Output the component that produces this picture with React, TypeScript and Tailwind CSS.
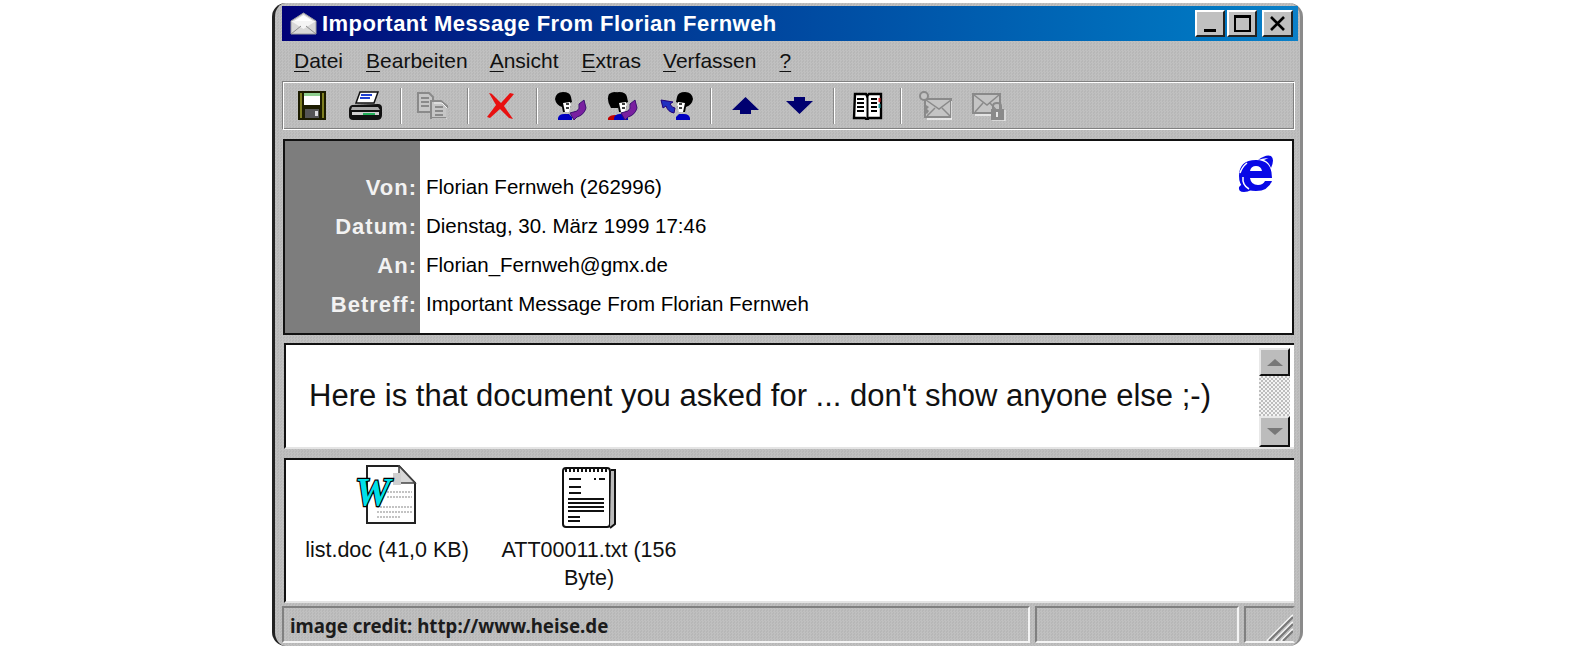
import React from "react";

const Sep = ({ ml, mr }: { ml: string; mr: string }) => (
  <div className={`h-[36px] w-[2px] bg-[#8a8a8a] border-r border-white ${ml} ${mr}`} />
);

const Person = ({ arrow, two, left }: { arrow: string; two?: boolean; left?: boolean }) => (
  <svg width="34" height="30" viewBox="0 0 34 30" className="block">
    {two && (
      <g>
        <path d="M10 24h11v5H3v-2q2-3 7-3z" fill="#c00000" />
        <path d="M4 3q6-4 10 0l2 7-3 7H6Q1 9 4 3z" fill="#000" />
      </g>
    )}
    <g transform={left ? "translate(34 0) scale(-1 1)" : two ? "translate(5 0)" : ""}>
      <path d="M4 29v-2q1-4 6-4h5l3 3v3z" fill="#0000c0" />
      <path d="M1 8q1-7 8-7t8 5l1 5-2 1 1 3-3 6H9l-1-5Q2 14 1 8z" fill="#000" />
      <path d="M9 12l7-1 1 3-2 7h-4z" fill="#fff" />
      <path d="M12 13h3M12 17h3" stroke="#000" strokeWidth="1.4" />
    </g>
    {left ? (
      <path d="M1 9l2 8 3-2q2 6 8 7l1-5q-3 0-5-4l3-2z" fill={arrow} stroke="#21007a" strokeWidth="1" />
    ) : (
      <path d="M30 9l2 8q-2 7-9 9l-3 3-4-7 7-2q3-2 2-7z" fill={arrow} stroke="#3a1070" strokeWidth="1" />
    )}
  </svg>
);

const Save = () => (
  <svg width="28" height="29" viewBox="0 0 28 29" className="block">
    <path d="M0 0h28v29H0z" fill="#1c1c00" />
    <path d="M2 2h2v25H2zM24 2h2v25h-2z" fill="#7f7f20" />
    <path d="M6 2h16v12H6z" fill="#fff" />
    <path d="M6 2h16v3H6z" fill="#8fcf8f" />
    <path d="M7 18h14v9H7z" fill="#555" />
    <path d="M17 20h3v5h-3z" fill="#ddd" />
  </svg>
);

const Printer = () => (
  <svg width="34" height="30" viewBox="0 0 34 30" className="block">
    <path d="M11 1h18l-4 11H7z" fill="#fff" stroke="#111" strokeWidth="1.5" />
    <path d="M12 4h11M11 7h10" stroke="#2040d0" strokeWidth="2" />
    <path d="M3 14q-3 1-3 5v6q0 4 4 4h24q5 0 5-5v-7q0-4-4-4z" fill="#111" />
    <path d="M3 16h26l2 3H2z" fill="#a8a8a8" />
    <path d="M3 21h27v3H3z" fill="#d0d0d0" />
    <path d="M14 22h12v2H14z" fill="#22b05a" />
  </svg>
);

const Copy = () => (
  <svg width="31" height="27" viewBox="0 0 31 27" className="block">
    <g fill="none" stroke="#8a8a8a" strokeWidth="2">
      <path d="M1 1h11l4 4v15H1z" fill="#c6c6c6" />
      <path d="M4 6h8M4 10h8M4 14h8" />
      <path d="M14 9h10l6 5v12H14z" fill="#c6c6c6" />
      <path d="M18 15h8M18 19h8M18 23h8" />
    </g>
    <path d="M17 11h8l5 5v11M15 27h15" stroke="#f2f2f2" strokeWidth="1" fill="none" />
  </svg>
);

const RedX = () => (
  <svg width="28" height="29" viewBox="0 0 28 29" className="block">
    <path d="M2 2q3 0 5 3l7 7 9-10 4 1-10 12 9 13-4-1-9-9-10 9-3-1 9-12z" fill="#e81010" />
  </svg>
);

const Up = () => (
  <svg width="27" height="17" viewBox="0 0 27 17" className="block">
    <path d="M13.5 0L27 13h-8v4H8v-4H0z" fill="#000070" />
  </svg>
);
const Down = () => (
  <svg width="27" height="17" viewBox="0 0 27 17" className="block">
    <path d="M8 0h11v4h8L13.500 17 0 4h8z" fill="#000070" />
  </svg>
);

const Book = () => (
  <svg width="31" height="28" viewBox="0 0 31 28" className="block">
    <path d="M3 2h11l1 2 2-2h12v24H17l-1 1h-2l-1-1H2z" fill="#fff" stroke="#000" strokeWidth="2.400" />
    <path d="M15.500 3v23" stroke="#000" strokeWidth="2" />
    <path d="M5 7h7M5 11h7M5 15h7M5 19h7M19 7h6M19 11h6M19 15h6M19 19h6" stroke="#000" strokeWidth="2" />
    <path d="M27.500 6v4" stroke="#e03030" strokeWidth="2" />
    <path d="M27.500 12v4" stroke="#20a0a0" strokeWidth="2" />
  </svg>
);

const MailKey = () => (
  <svg width="34" height="30" viewBox="0 0 34 30" className="block">
    <path d="M7 8h26v18H7z" fill="#c4c4c4" stroke="#8a8a8a" strokeWidth="2" />
    <path d="M8 9l13 9 12-9M9 25l8-8M32 25l-8-8" fill="none" stroke="#8a8a8a" strokeWidth="1.500" />
    <path d="M9 28h25V10" fill="none" stroke="#f2f2f2" strokeWidth="1.500" />
    <circle cx="6" cy="5" r="4" fill="#c4c4c4" stroke="#8a8a8a" strokeWidth="2" />
    <path d="M6 9v12l3 2 2-3-2-2 2-2-3-2" fill="#8a8a8a" />
  </svg>
);

const MailLock = () => (
  <svg width="34" height="30" viewBox="0 0 34 30" className="block">
    <path d="M1 3h27v19H1z" fill="#c4c4c4" stroke="#8a8a8a" strokeWidth="2" />
    <path d="M2 4l13 10L27 4M3 21l8-9M26 21l-8-9" fill="none" stroke="#8a8a8a" strokeWidth="1.500" />
    <path d="M3 24h18" stroke="#f2f2f2" strokeWidth="1.500" />
    <path d="M21 18v-3q0-3 4-3t4 3v3" fill="none" stroke="#8a8a8a" strokeWidth="2" />
    <path d="M19 18h13v11H19z" fill="#8a8a8a" />
    <path d="M25 21v5" stroke="#e8e8e8" strokeWidth="2" />
    <path d="M33 19v11H20" fill="none" stroke="#f2f2f2" strokeWidth="1" />
  </svg>
);

const Envelope = () => (
  <svg width="27" height="23" viewBox="0 0 27 23" className="block">
    <path d="M1 9L13.500 1 26 9v13H1z" fill="#d8d8d8" stroke="#a0a0a0" />
    <path d="M1 9h25l-12.500 8z" fill="#f4f4f4" />
    <path d="M1 22l10-8M26 22l-10-8" stroke="#8d8d8d" />
    <path d="M4 9l9.500-6L23 9" fill="#fff" />
  </svg>
);

const IELogo = () => (
  <svg width="38" height="40" viewBox="0 0 38 40" className="block">
    <path d="M3 22Q3 6 20 6q16 0 16 18H14q1 7 8 7 5 0 7-4h7q-4 10-16 10Q3 37 3 22zM14 17h12q-1-5-6-5t-6 5z" fill="#0808e6" fillRule="evenodd" />
    <path d="M22 6q8-6 13-4 4 3 0 12-2-6-7-8 4-2 5-1-3-2-11 1z" fill="#0808e6" />
    <path d="M3 33q-1 5 5 5 4 0 7-2-6-1-9-6z" fill="#0808e6" />
    <path d="M7 23q-1 8 6 12M11 9Q6 13 4 19" fill="none" stroke="#fff" strokeWidth="1.500" />
  </svg>
);

const WordIcon = () => (
  <svg width="64" height="60" viewBox="0 0 64 60" className="block">
    <path d="M14 1h32l16 17v40H14z" fill="#fff" stroke="#222" strokeWidth="2" />
    <path d="M46 1v17h16z" fill="#d8d8d8" stroke="#444" strokeWidth="1.500" />
    <path d="M40 8h8v12h-8z" fill="#cfcfcf" />
    <path d="M34 27h25M34 32h25M24 42h35M24 47h35M24 52h24" stroke="#b0b0b0" strokeWidth="1.500" strokeDasharray="2 1" />
    <text x="2" y="40" fontFamily="'Liberation Serif', serif" fontWeight="700" fontStyle="italic" fontSize="40" fill="#00e0e8" stroke="#000" strokeWidth="2.400" paintOrder="stroke">W</text>
  </svg>
);

const NoteIcon = () => (
  <svg width="54" height="64" viewBox="0 0 54 64" className="block">
    <rect x="1" y="3" width="47" height="59" rx="3" fill="#fff" stroke="#111" strokeWidth="2" />
    <path d="M49 5h4v54l-5 4" fill="#bbb" stroke="#111" strokeWidth="2" />
    <path d="M3 5h44" stroke="#111" strokeWidth="4" strokeDasharray="2 2" />
    <path d="M7 14h12M7 22h12M7 28h12M32 14h2M37 14h6" stroke="#111" strokeWidth="2" />
    <path d="M6 34h36M6 38h36M6 42h36M6 46h36" stroke="#111" strokeWidth="2" />
    <path d="M6 52h12M6 56h12" stroke="#111" strokeWidth="2" />
  </svg>
);

const Menu = ({ u, rest, className }: { u: string; rest: string; className: string }) => (
  <span className={className}>
    <span className="underline underline-offset-[3px] decoration-1">{u}</span>
    {rest}
  </span>
);

const Row = ({ label, value }: { label: string; value: string }) => (
  <div className="flex h-[39px] items-center">
    <div className="w-[132px] shrink-0 text-right text-[22px] font-bold text-[#f2f2f2] tracking-[1px]">{label}</div>
    <div className="ml-[9px] text-[20.500px] text-black">{value}</div>
  </div>
);

export default function App() {
  return (
    <div className="flex h-[648px] w-full justify-center bg-white pt-[3px] font-['Liberation_Sans',Arial,sans-serif]">
      <div className="flex h-[643px] w-[1031px] flex-col rounded-[14px] border-l-[3px] border-r-[3px] border-l-[#222] border-r-[#8a8a8a] bg-[repeating-conic-gradient(#c0c0c0_0_25%,#b7b7b7_0_50%)] bg-[length:3px_3px] pl-[7px] pr-[2px] pt-[3px]">
        {/* Title bar */}
        <div className="flex h-[35px] shrink-0 items-center bg-gradient-to-r from-[#000078] to-[#0c80c8] pl-[8px] pr-[5px] text-white">
          <Envelope />
          <span className="ml-[5px] text-[22px] font-bold tracking-[0.45px] whitespace-nowrap">Important Message From Florian Fernweh</span>
          <div className="ml-auto flex">
            <div className="flex h-[27px] w-[30px] items-end justify-center border-2 border-t-white border-l-white border-r-[#222] border-b-[#222] bg-[#c0c0c0] pb-[3px]">
              <div className="h-[3px] w-[12px] bg-black" />
            </div>
            <div className="ml-[2px] flex h-[27px] w-[30px] items-center justify-center border-2 border-t-white border-l-white border-r-[#222] border-b-[#222] bg-[#c0c0c0]">
              <div className="h-[17px] w-[17px] border-[2px] border-t-[3px] border-black" />
            </div>
            <div className="ml-[5px] flex h-[27px] w-[31px] items-center justify-center border-2 border-t-white border-l-white border-r-[#222] border-b-[#222] bg-[#c0c0c0]">
              <svg width="17" height="15" viewBox="0 0 17 15"><path d="M2 1l13 13M15 1L2 14" stroke="#000" strokeWidth="2.600" /></svg>
            </div>
          </div>
        </div>

        {/* Menu */}
        <div className="flex h-[40px] shrink-0 items-center pl-[12px] text-[21px] text-[#111]">
          <Menu u="D" rest="atei" className="mr-[23px]" />
          <Menu u="B" rest="earbeiten" className="mr-[22px]" />
          <Menu u="A" rest="nsicht" className="mr-[23px]" />
          <Menu u="E" rest="xtras" className="mr-[22px]" />
          <Menu u="V" rest="erfassen" className="mr-[23px]" />
          <Menu u="?" rest="" className="" />
        </div>

        {/* Toolbar */}
        <div className="flex h-[49px] shrink-0 items-center border border-t-[#808080] border-l-[#808080] border-r-white border-b-white pl-[15px] shadow-[inset_1px_1px_0_#fff,inset_-1px_-1px_0_#808080] mr-[3px]">
          <Save />
          <div className="ml-[23px]"><Printer /></div>
          <Sep ml="ml-[17px]" mr="mr-[15px]" />
          <Copy />
          <Sep ml="ml-[19px]" mr="mr-[18px]" />
          <RedX />
          <Sep ml="ml-[21px]" mr="mr-[16px]" />
          <Person arrow="#7a20a0" />
          <div className="ml-[17px]"><Person arrow="#7a20a0" two /></div>
          <div className="ml-[21px]"><Person arrow="#2030c0" left /></div>
          <Sep ml="ml-[16px]" mr="mr-[20px]" />
          <Up />
          <div className="ml-[27px]"><Down /></div>
          <Sep ml="ml-[20px]" mr="mr-[17px]" />
          <Book />
          <Sep ml="ml-[17px]" mr="mr-[16px]" />
          <MailKey />
          <div className="ml-[20px]"><MailLock /></div>
        </div>

        {/* Header */}
        <div className="mt-[9px] mr-[4px] flex h-[196px] shrink-0 border-2 border-[#111] bg-white ml-[1px]">
          <div className="flex w-full">
            <div className="relative flex w-full flex-col bg-[linear-gradient(to_right,#7d7d7d_135px,#fff_135px)] pt-[27px]">
              <Row label="Von:" value="Florian Fernweh (262996)" />
              <Row label="Datum:" value="Dienstag, 30. März 1999 17:46" />
              <Row label="An:" value="Florian_Fernweh@gmx.de" />
              <Row label="Betreff:" value="Important Message From Florian Fernweh" />
              <div className="absolute right-[18px] top-[13px]"><IELogo /></div>
            </div>
          </div>
        </div>

        {/* Body */}
        <div className="mt-[8px] mr-[4px] ml-[2px] flex h-[106px] shrink-0 border-t-2 border-l-2 border-t-[#111] border-l-[#111] border-b-2 border-b-[#e4e4e4] bg-white">
          <div className="flex flex-1 items-center pl-[23px] text-[31px] text-[#111] whitespace-nowrap">
            Here is that document you asked for ... don't show anyone else ;-)
          </div>
          <div className="mr-[4px] flex w-[31px] shrink-0 flex-col pt-[3px]">
            <div className="flex h-[28px] items-center justify-center border-2 border-t-[#e8e8e8] border-l-[#e8e8e8] border-r-[#111] border-b-[#111] bg-[#bcbcbc]">
              <div className="h-0 w-0 border-x-[8px] border-b-[7px] border-x-transparent border-b-[#777]" />
            </div>
            <div className="flex-1 bg-[repeating-conic-gradient(#bdbdbd_0_25%,#f4f4f4_0_50%)] bg-[length:4px_4px]" />
            <div className="flex h-[31px] items-center justify-center border-2 border-t-[#e8e8e8] border-l-[#e8e8e8] border-r-[#111] border-b-[#111] bg-[#bcbcbc]">
              <div className="h-0 w-0 border-x-[8px] border-t-[7px] border-x-transparent border-t-[#777]" />
            </div>
          </div>
        </div>

        {/* Attachments */}
        <div className="mt-[9px] mr-[4px] ml-[2px] flex h-[145px] shrink-0 items-start border-t-2 border-l-2 border-t-[#111] border-l-[#111] border-b-2 border-b-[#e4e4e4] bg-white pt-[5px] text-[21.500px] leading-[28px] text-[#111]">
          <div className="ml-[1px] flex w-[200px] flex-col items-center">
            <div className="h-[66px] ml-[-4px]"><WordIcon /></div>
            <div className="mt-[5px] whitespace-nowrap">list.doc (41,0 KB)</div>
          </div>
          <div className="ml-[2px] flex w-[200px] flex-col items-center">
            <div className="h-[66px]"><NoteIcon /></div>
            <div className="mt-[5px] text-center">ATT00011.txt (156<br />Byte)</div>
          </div>
        </div>

        {/* Status */}
        <div className="mt-[3px] mb-[3px] flex h-[37px] shrink-0 gap-[5px] pr-[3px]">
          <div className="flex w-[748px] items-center border-2 border-t-[#808080] border-l-[#808080] border-r-[#f4f4f4] border-b-[#f4f4f4] pl-[6px] pt-[3px] font-['Noto_Sans',sans-serif] text-[18.700px] font-bold text-[#1c1c1c]">
            image credit: http://www.heise.de
          </div>
          <div className="w-[204px] border-2 border-t-[#808080] border-l-[#808080] border-r-[#f4f4f4] border-b-[#f4f4f4]" />
          <div className="relative flex-1 overflow-hidden border-2 border-t-[#808080] border-l-[#808080] border-r-transparent border-b-[#f4f4f4]">
            <svg width="30" height="30" viewBox="0 0 30 30" className="absolute bottom-0 right-0">
              <path d="M4 30L30 4M11 30L30 11M18 30L30 18" stroke="#f4f4f4" strokeWidth="2" />
              <path d="M6 30L30 6M13 30L30 13M20 30L30 20" stroke="#777" strokeWidth="2" />
            </svg>
          </div>
        </div>
      </div>
    </div>
  );
}
